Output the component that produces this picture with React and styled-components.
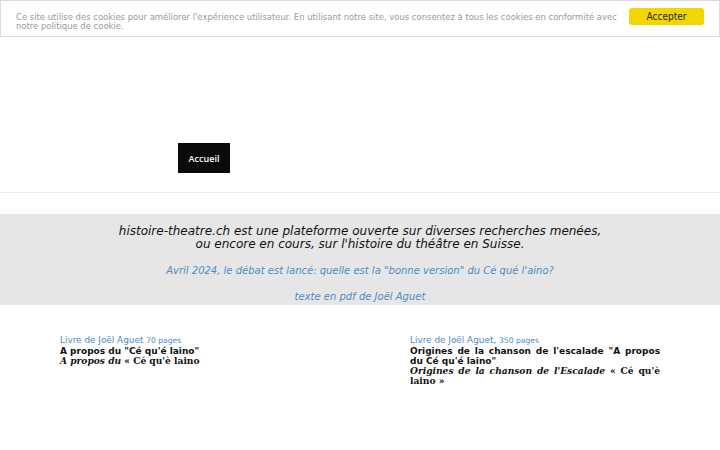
import React from "react";
import styled, { createGlobalStyle } from "styled-components";

const GlobalStyle = createGlobalStyle`
  html, body {
    margin: 0;
    padding: 0;
    background: #fff;
    font-family: "DejaVu Sans", Verdana, sans-serif;
  }
`;

const CookieBar = styled.div`
  display: flex;
  align-items: flex-start;
  justify-content: space-between;
  height: 37px;
  box-sizing: border-box;
  padding: 11px 15px 0 15px;
  border: 1px solid #dcdcdc;
  background: #fff;
`;

const CookieText = styled.p`
  margin: 0;
  font-family: "DejaVu Sans Condensed", "DejaVu Sans", sans-serif;
  font-size: 9.4px;
  line-height: 9px;
  color: #9a9a9a;
  width: 612px;
`;

const AcceptButton = styled.button`
  width: 75px;
  height: 17px;
  border: none;
  border-radius: 3px;
  background: #f2d600;
  color: #222;
  font-family: "DejaVu Sans Condensed", "DejaVu Sans", sans-serif;
  font-size: 10px;
  padding: 0;
  margin-top: -4px;
`;

const Header = styled.header`
  height: 156px;
  border-bottom: 1px solid #ececec;
  display: flex;
  align-items: flex-end;
  padding: 0 0 19px 178px;
  box-sizing: border-box;
`;

const NavButton = styled.a`
  display: flex;
  align-items: center;
  justify-content: center;
  width: 52px;
  height: 30px;
  background: #0a0a0a;
  color: #fff;
  font-family: "Open Sans", sans-serif;
  font-size: 9px;
  font-weight: 600;
  text-decoration: none;
`;

const Band = styled.section`
  margin-top: 21px;
  background: #e6e6e6;
  height: 91px;
  box-sizing: border-box;
  padding-top: 11px;
  text-align: center;
`;

const Lead = styled.p`
  margin: 0;
  font-size: 12px;
  line-height: 13px;
  font-style: italic;
  color: #111;
`;

const BandLink = styled.a`
  display: block;
  font-size: 10px;
  font-style: italic;
  color: #4d8cc4;
  text-decoration: none;
  margin-top: ${({ $gap }) => $gap}px;
  line-height: 13px;
`;

const Books = styled.section`
  display: grid;
  grid-template-columns: 250px 250px;
  column-gap: 100px;
  padding: 30px 0 0 60px;
`;

const Book = styled.div`
  display: flex;
  flex-direction: column;
`;

const Author = styled.span`
  font-size: 8.9px;
  color: #4d8cc4;
  line-height: 11px;
`;

const Pages = styled.span`
  font-size: 7.6px;
`;

const Title = styled.span`
  font-size: 9px;
  font-weight: bold;
  color: #111;
  line-height: 10px;
  text-align: justify;
`;

const SerifTitle = styled.span`
  font-family: "DejaVu Serif", serif;
  font-size: 9.1px;
  font-weight: bold;
  color: #111;
  line-height: 10px;
  text-align: justify;

  em {
    font-style: italic;
  }
`;

export default function App() {
  return (
    <>
      <GlobalStyle />
      <CookieBar>
        <CookieText>
          Ce site utilise des cookies pour améliorer l'expérience utilisateur.
          En utilisant notre site, vous consentez à tous les cookies en
          conformité avec notre politique de cookie.
        </CookieText>
        <AcceptButton>Accepter</AcceptButton>
      </CookieBar>
      <Header>
        <NavButton href="#">Accueil</NavButton>
      </Header>
      <Band>
        <Lead>
          histoire-theatre.ch est une plateforme ouverte sur diverses
          recherches menées,
          <br />
          ou encore en cours, sur l'histoire du théâtre en Suisse.
        </Lead>
        <BandLink href="#" $gap={13}>
          Avril 2024, le débat est lancé: quelle est la "bonne version" du Cé
          qué l'aino?
        </BandLink>
        <BandLink href="#" $gap={13}>
          texte en pdf de Joël Aguet
        </BandLink>
      </Band>
      <Books>
        <Book>
          <Author>
            Livre de Joël Aguet <Pages>70 pages</Pages>
          </Author>
          <Title>A propos du "Cé qu'é laino"</Title>
          <SerifTitle>
            <em>A propos du</em> « Cé qu'è laino
          </SerifTitle>
        </Book>
        <Book>
          <Author>
            Livre de Joël Aguet, <Pages>350 pages</Pages>
          </Author>
          <Title>
            Origines de la chanson de l'escalade "A propos du Cé qu'é laino"
          </Title>
          <SerifTitle>
            <em>Origines de la chanson de l'Escalade</em> « Cé qu'è laino »
          </SerifTitle>
        </Book>
      </Books>
    </>
  );
}
